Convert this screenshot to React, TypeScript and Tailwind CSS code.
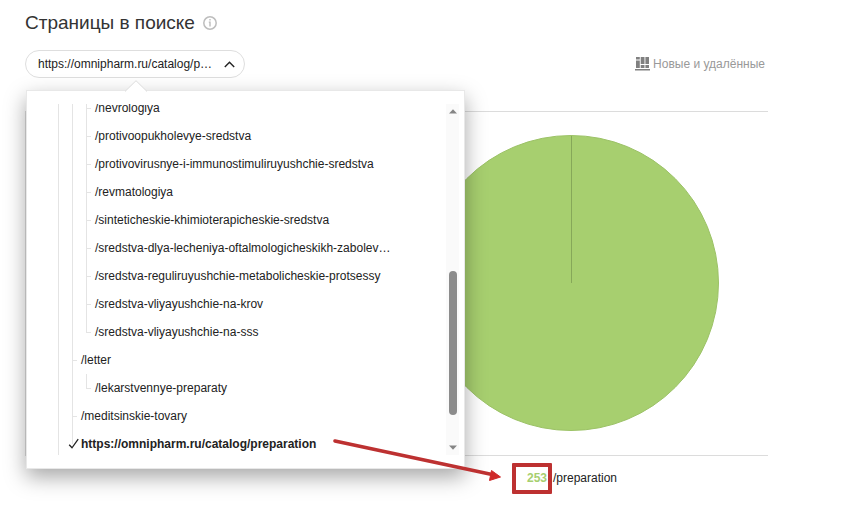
import { useState } from 'react'
import clsx from 'clsx'

type Guide = 'line' | 'tee' | 'corner'

interface TreeItem {
  path: string
  guides: Guide[]
}

const ROOT = 'https://omnipharm.ru/catalog/preparation'

const ITEMS: TreeItem[] = [
  { path: '/nevrologiya', guides: ['line', 'line', 'tee'] },
  { path: '/protivoopukholevye-sredstva', guides: ['line', 'line', 'tee'] },
  { path: '/protivovirusnye-i-immunostimuliruyushchie-sredstva', guides: ['line', 'line', 'tee'] },
  { path: '/revmatologiya', guides: ['line', 'line', 'tee'] },
  { path: '/sinteticheskie-khimioterapicheskie-sredstva', guides: ['line', 'line', 'tee'] },
  { path: '/sredstva-dlya-lecheniya-oftalmologicheskikh-zabolev…', guides: ['line', 'line', 'tee'] },
  { path: '/sredstva-reguliruyushchie-metabolicheskie-protsessy', guides: ['line', 'line', 'tee'] },
  { path: '/sredstva-vliyayushchie-na-krov', guides: ['line', 'line', 'tee'] },
  { path: '/sredstva-vliyayushchie-na-sss', guides: ['line', 'line', 'corner'] },
  { path: '/letter', guides: ['line', 'tee'] },
  { path: '/lekarstvennye-preparaty', guides: ['line', 'line', 'corner'] },
  { path: '/meditsinskie-tovary', guides: ['line', 'tee'] },
  { path: ROOT, guides: ['line', 'corner'] },
]

const shorten = (path: string) => (path.length > 32 ? path.slice(0, 30) + '…' : path)

function GuideCell({ type, checked }: { type: Guide; checked: boolean }) {
  if (type === 'line') return <span className="h-full w-[14px] shrink-0 border-l border-[#e4e4e4]" />
  return (
    <span className="relative flex h-full w-[9px] shrink-0 items-center">
      <span className={clsx('absolute left-0 top-0 w-px bg-[#e4e4e4]', type === 'tee' ? 'h-full' : 'h-1/2')} />
      {checked ? (
        <svg className="absolute -left-1" width="12" height="12" viewBox="0 0 12 12" fill="none" stroke="#222" strokeWidth="1.3">
          <path d="M1.2 6.8 4 9.8 10.2 1.2" />
        </svg>
      ) : (
        <span className="h-px w-[5px] bg-[#e4e4e4]" />
      )}
    </span>
  )
}

function Scrollbar() {
  return (
    <div className="flex w-[13px] shrink-0 flex-col items-center bg-[#fafafa] py-[5px]" aria-hidden="true">
      <svg width="8" height="5" viewBox="0 0 8 5" fill="#858585"><path d="M0 4.5 4 .3 8 4.5z" /></svg>
      <div className="flex w-full flex-1 flex-col items-center pb-[30px]">
        <div className="flex-1" />
        <div className="h-[144px] w-2 rounded-full bg-[#8c8c8c]" />
      </div>
      <svg width="8" height="5" viewBox="0 0 8 5" fill="#858585"><path d="M0 .5 4 4.7 8 .5z" /></svg>
    </div>
  )
}

function PathMenu({ selected, onSelect }: { selected: string; onSelect: (path: string) => void }) {
  return (
    <div className="absolute left-px top-10 z-10 w-[439px] border border-[#e8e8e8] bg-white py-[13px] pl-[31px] pr-[5px] shadow-[0_8px_20px_rgba(0,0,0,0.35)]">
      <svg className="absolute -top-[11px] left-[98px]" width="22" height="12" viewBox="0 0 22 12">
        <path d="M0 11.5 11 .7 22 11.5" fill="#fff" stroke="#dcdcdc" />
        <path d="M1 12h20" stroke="#fff" />
      </svg>
      <div className="flex h-[351px] overflow-hidden">
        <ul className="-mt-[10px] min-w-0 flex-1 pr-8">
          {ITEMS.map((item) => (
            <li key={item.path}>
              <button
                type="button"
                onClick={() => onSelect(item.path)}
                className="flex h-7 w-full cursor-pointer items-center text-left text-[12px] text-[#222]"
              >
                {item.guides.map((type, i) => (
                  <GuideCell key={i} type={type} checked={selected === item.path && i === item.guides.length - 1} />
                ))}
                <span className={clsx('whitespace-nowrap', selected === item.path && 'font-bold')}>{item.path}</span>
              </button>
            </li>
          ))}
        </ul>
        <Scrollbar />
      </div>
    </div>
  )
}

export default function App() {
  const [open, setOpen] = useState(true)
  const [selected, setSelected] = useState(ROOT)

  return (
    <main className="relative min-h-screen bg-white pl-[25px] pr-[73px] pt-[9px] font-['Liberation_Sans',Arial,sans-serif] text-[#222]">
      <div className="flex h-7 items-center gap-2">
        <h1 className="text-[19px] leading-7 text-[#333]">Страницы в поиске</h1>
        <svg width="14" height="14" viewBox="0 0 14 14" fill="none" stroke="#bdbdbd">
          <circle cx="7" cy="7" r="6.2" strokeWidth="1.5" />
          <path d="M5.8 6.1H7v4.3" strokeWidth="1.4" />
          <path d="M6.3 3.8h1.4" strokeWidth="1.5" />
        </svg>
      </div>

      <div className="mt-[13px] flex items-center justify-between">
        <div className="relative">
          <button
            type="button"
            aria-expanded={open}
            onClick={() => setOpen(!open)}
            className="flex h-7 w-[220px] cursor-pointer items-center justify-between rounded-full border border-[#dedede] bg-white pl-3 pr-[9px] text-[12px]"
          >
            <span className="whitespace-nowrap">{shorten(selected)}</span>
            <svg width="11" height="7" viewBox="0 0 11 7" fill="none" stroke="#222" strokeWidth="1.4">
              <path d="M.8 6 5.5 1.2 10.2 6" />
            </svg>
          </button>
          {open && <PathMenu selected={selected} onSelect={setSelected} />}
        </div>
        <button type="button" className="mr-[3px] flex cursor-pointer items-center gap-[3px] text-[12px] text-[#999]">
          <svg width="15" height="14" viewBox="0 0 15 14" fill="#808080">
            <path d="M0 12h15v1.6H0zM1 3.4h3.8V11H1zM1 0h3.800v2.400H1zM5.700 0h3.800v7H5.700zM5.700 8h3.800v3H5.700zM10.400 0H14v7h-3.600zM10.400 8H14v3h-3.600z" />
          </svg>
          Новые и удалённые
        </button>
      </div>

      <section className="mt-[33px] flex h-[345px] items-center justify-center border-y border-l border-[#dcdcdc] pb-[2px] pl-[347px]">
        <svg width="296" height="296" viewBox="0 0 296 296" role="img" aria-label="/preparation: 253">
          <circle cx="148" cy="148" r="147.5" fill="#a7cf6f" stroke="#9cc267" />
          <path d="M148.5 1v147" stroke="#86a859" />
        </svg>
      </section>

      <div className="flex justify-center pl-[351px] pt-3 text-[12px] leading-5">
        <span className="relative mr-[6px] font-bold text-[#a7cf6f]">
          253
          <span className="absolute -bottom-[6px] -left-[15px] -right-[5px] -top-[5px] rounded-[1px] border-4 border-[#bd3131]" />
        </span>
        <span>/preparation</span>
      </div>

      {/* arrow from the chosen path to its page count */}
      <svg className="pointer-events-none absolute left-[330px] top-[435px] z-20" width="174" height="48" viewBox="0 0 174 48">
        <path d="M5 6 162 39.5" stroke="#bd3131" strokeWidth="3.6" strokeLinecap="round" />
        <path d="M161.500 35.500 170.500 42 159.500 45.500z" fill="#cf2a2a" stroke="#cf2a2a" />
      </svg>
    </main>
  )
}
